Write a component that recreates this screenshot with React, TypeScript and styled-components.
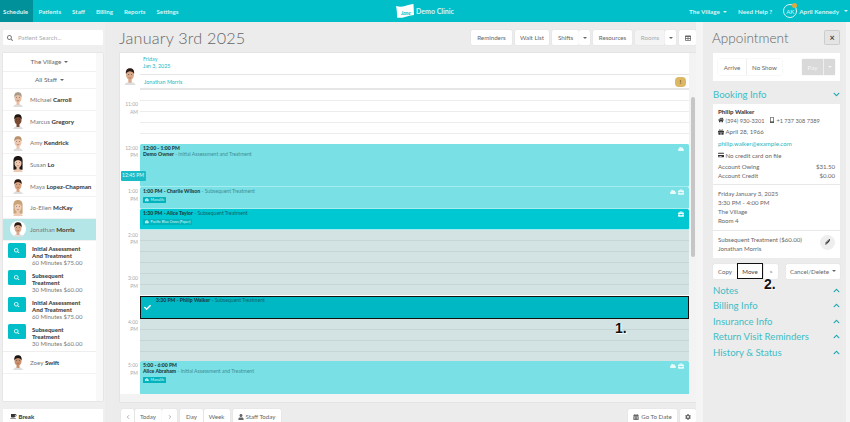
import styled, { createGlobalStyle } from "styled-components";
import {
  FaBriefcase, FaCalendarAlt, FaCheck, FaChevronDown, FaChevronUp, FaCloud, FaCoffee, FaCog, FaTable,
  FaCreditCard, FaGift, FaHome, FaMobileAlt, FaPencilAlt, FaSearch, FaUser,
} from "react-icons/fa";
import { FiChevronLeft, FiChevronRight } from "react-icons/fi";

const GlobalStyle = createGlobalStyle`
  html, body { margin: 0; padding: 0; height: 422px; overflow: hidden; background: #ececec; }
  * { box-sizing: border-box; }
  body { font-family: "Lato", "Open Sans", sans-serif; color: #555; }
`;

const Page = styled.div`
  width: 850px;
  height: 422px;
  display: flex;
  flex-direction: column;
  overflow: hidden;
`;

const TopNav = styled.nav`
  height: 22px;
  flex: none;
  background: #00bfc9;
  display: grid;
  grid-template-columns: 1fr auto 1fr;
  align-items: stretch;
  color: #d5f5f6;
  font-size: 6.3px;
  font-weight: 700;
`;
const NavTabs = styled.div`
  display: flex;
  font-size: 6.2px;
`;
const NavTab = styled.a<{ $active?: boolean }>`
  display: flex;
  align-items: center;
  padding-left: ${(p) => (p.$active ? "3px" : "5.5px")};
  padding-right: ${(p) => (p.$active ? "5px" : "5.5px")};
  background: ${(p) => (p.$active ? "#00919b" : "transparent")};
`;
const Brand = styled.div`
  display: flex;
  align-items: center;
  gap: 2px;
  font-size: 7px;
`;
const NavRight = styled.div`
  display: flex;
  align-items: center;
  justify-content: flex-end;
  gap: 11px;
  padding-right: 2px;
`;
const Caret = styled.span`
  display: inline-block;
  margin-left: 3px;
  border-left: 2px solid transparent;
  border-right: 2px solid transparent;
  border-top: 2.2px solid currentColor;
  vertical-align: middle;
`;
const UserChip = styled.span`
  display: flex;
  align-items: center;
  gap: 2px;
`;
const Initials = styled.span`
  position: relative;
  width: 14px;
  height: 14px;
  border: 0.8px solid #d5f5f6;
  border-radius: 50%;
  display: flex;
  align-items: center;
  justify-content: center;
  font-size: 6px;
  font-weight: 400;
  &::after {
    content: "";
    position: absolute;
    top: -2px;
    right: -1px;
    width: 5px;
    height: 5px;
    background: #e0a93c;
    border-radius: 50%;
  }
`;

const Body = styled.div`
  flex: 1;
  display: flex;
  min-height: 0;
`;

const Sidebar = styled.aside`
  width: 105px;
  flex: none;
  background: #efefef;
  padding: 8px 2px 0 3px;
  display: flex;
  flex-direction: column;
  overflow: hidden;
`;
const SearchBox = styled.div`
  height: 15px;
  flex: none;
  background: #fff;
  border-radius: 1.5px;
  display: flex;
  align-items: center;
  gap: 5px;
  padding-left: 4px;
  font-size: 6.2px;
  color: #aaa;
  margin-bottom: 8px;
  svg { color: #777; font-size: 6px; }
`;
const StaffPanel = styled.div`
  height: 348px;
  flex: none;
  background: #f8f8f8;
  padding-right: 7px;
  box-shadow: 0 0 1px #bbb;
`;
const StaffInner = styled.div`
  height: 100%;
  background: #fff;
`;
const FilterRow = styled.div<{ $h: number }>`
  height: ${(p) => p.$h}px;
  display: flex;
  align-items: center;
  justify-content: center;
  font-size: 6.4px;
  color: #666;
  border-bottom: 0.5px solid #f0f0f0;
`;
const StaffRow = styled.div<{ $selected?: boolean }>`
  height: 21.7px;
  display: flex;
  align-items: center;
  gap: 4px;
  padding-left: 7px;
  font-size: 6.2px;
  color: #777;
  background: ${(p) => (p.$selected ? "#b5e6e7" : "#fff")};
  border-bottom: 0.5px solid #f2f2f2;
  white-space: nowrap;
  b { color: #444; font-weight: 900; }
`;
const ServiceList = styled.div`
  display: flex;
  flex-direction: column;
  padding-top: 2px;
  height: 111px;
  border-bottom: 0.5px solid #eee;
`;
const ServiceRow = styled.div`
  height: 27.5px;
  display: flex;
  gap: 6px;
  padding-left: 5px;
  font-size: 6px;
  line-height: 7.2px;
  color: #777;
  b { display: block; color: #444; font-weight: 900; }
`;
const ServiceText = styled.div`
  padding-top: 2px;
`;
const ServiceButton = styled.span`
  width: 18px;
  height: 15px;
  background: #00bfc9;
  border-radius: 1.5px;
  color: #e6fbfb;
  display: flex;
  align-items: center;
  justify-content: center;
  font-size: 5.5px;
  flex: none;
`;
const BreakBox = styled.div`
  margin-top: 8px;
  height: 20px;
  flex: none;
  background: #fff;
  padding: 4px 0 0 7px;
  font-size: 6px;
  font-weight: 900;
  color: #444;
  display: flex;
  gap: 2px;
  align-items: flex-start;
  svg { font-size: 6.5px; color: #333; }
`;

const Main = styled.main`
  width: 586px;
  flex: none;
  margin-left: 5px;
  background: #ececec;
  padding: 0 0 0 9px;
  display: flex;
  flex-direction: column;
  position: relative;
  overflow: hidden;
`;
const MainHead = styled.div`
  height: 31px;
  flex: none;
  display: flex;
  align-items: center;
  justify-content: space-between;
`;
const Title = styled.h1`
  margin: 0;
  font-size: 16.2px;
  font-weight: 300;
  letter-spacing: 0.2px;
  color: #666;
`;
const ToolGroup = styled.div`
  display: flex;
  gap: 3px;
`;
const Btn = styled.button<{ $w?: number; $dim?: boolean; $join?: boolean }>`
  height: 15px;
  flex: none;
  width: ${(p) => (p.$w ? `${p.$w}px` : "auto")};
  padding: 0;
  border: 0;
  border-radius: 1.5px;
  background: ${(p) => (p.$dim ? "#f4f4f4" : "#fff")};
  color: ${(p) => (p.$dim ? "#aaa" : "#666")};
  font: 400 6.2px "Lato", sans-serif;
  display: flex;
  align-items: center;
  justify-content: center;
  gap: 2px;
  box-shadow: 0 0 1px #ccc;
  margin-right: ${(p) => (p.$join ? "-3px" : "0")};
  svg { font-size: 6px; }
`;
const Calendar = styled.section`
  width: 576px;
  height: 349px;
  flex: none;
  margin-left: 1px;
  background: #fff;
  box-shadow: 0 0 1px #bbb;
  display: flex;
  flex-direction: column;
  position: relative;
`;
const CalTop = styled.div`
  display: flex;
  height: 37px;
  flex: none;
`;
const CalAvatarCell = styled.div`
  width: 20px;
  display: flex;
  align-items: center;
  justify-content: center;
  padding-top: 9px;
`;
const CalTopRight = styled.div`
  flex: 1;
  display: flex;
  flex-direction: column;
  border-right: 7px solid #f3f3f3;
`;
const DateCell = styled.div`
  height: 21px;
  padding: 2.5px 0 0 3px;
  font-size: 5.4px;
  line-height: 7.6px;
  color: #29b7bf;
`;
const StaffHead = styled.div`
  height: 16px;
  border-top: 1.5px solid #e6e6e6;
  border-bottom: 2px solid #e6e6e6;
  display: flex;
  align-items: center;
  justify-content: space-between;
  padding: 0 3px 0 4px;
  font-size: 5.4px;
  color: #29b7bf;
`;
const WarnBadge = styled.span`
  width: 11px;
  height: 10px;
  border-radius: 4px;
  background: #dcb764;
  color: #6b5522;
  font-size: 5px;
  font-weight: 900;
  display: flex;
  align-items: center;
  justify-content: center;
`;
const CalBody = styled.div`
  height: 304px;
  flex: none;
  display: flex;
  overflow: hidden;
`;
const HourColumn = styled.div`
  width: 20px;
  flex: none;
  padding-top: 11px;
`;
const HourLabel = styled.div`
  height: 43.5px;
  text-align: right;
  padding-right: 2px;
  font-size: 5px;
  line-height: 7.6px;
  color: #aaa;
`;
const Day = styled.div`
  width: 549px;
  flex: none;
  display: flex;
  flex-direction: column;
`;
const Slots = styled.div<{ $h: number; $off?: boolean }>`
  height: ${(p) => p.$h}px;
  flex: none;
  background-color: ${(p) => (p.$off ? "#d3e3e3" : "#fff")};
  background-image: repeating-linear-gradient(
    to bottom,
    transparent 0,
    transparent 10px,
    ${(p) => (p.$off ? "#c4d6d6" : "#ececec")} 10px,
    ${(p) => (p.$off ? "#c4d6d6" : "#ececec")} 10.9px
  );
`;
const Appt = styled.div<{ $h: number; $dark?: boolean; $moving?: boolean }>`
  height: ${(p) => p.$h}px;
  flex: none;
  position: relative;
  background: ${(p) => (p.$moving ? "#00b8c4" : p.$dark ? "#00c8d2" : "#79e0e5")};
  border: ${(p) => (p.$moving ? "1px solid #111" : "0")};
  border-bottom: ${(p) => (p.$moving ? "1px solid #111" : "0.5px solid #a5ecef")};
  border-radius: ${(p) => (p.$moving ? "0" : "1.5px")};
  margin-top: 0.5px;
  padding: ${(p) => (p.$moving ? "1.5px 0 0 15px" : "2px 0 0 3px")};
  font-size: 5.1px;
  line-height: 5.8px;
  color: ${(p) => (p.$dark || p.$moving ? "#11636b" : "#3f8f95")};
  b { color: #1c3f44; font-weight: 900; }
`;
const ApptIcons = styled.span`
  position: absolute;
  top: 2px;
  right: 5px;
  display: flex;
  gap: 2px;
  color: #e7fbfb;
  font-size: 6px;
`;
const InsuranceTag = styled.span`
  display: inline-flex;
  align-items: center;
  gap: 2px;
  margin-top: 2px;
  height: 6px;
  padding: 0 2px;
  background: #00b3bd;
  color: #dff8f9;
  font-size: 3.6px;
  line-height: 6px;
  border-radius: 0.5px;
  svg { font-size: 3.6px; }
`;
const CheckMark = styled.span`
  position: absolute;
  left: 3px;
  top: 7px;
  color: #fff;
  font-size: 7px;
  display: flex;
`;
const CalFoot = styled.div`
  flex: 1;
  background: #f3f3f3;
`;
const ScrollTrack = styled.div`
  width: 7px;
  flex: none;
  background: #f3f3f3;
  padding: 7px 1px 0 2px;
`;
const ScrollThumb = styled.div`
  height: 160px;
  background: #c6c6c6;
  border-radius: 2px;
`;
const NowBadge = styled.span`
  position: absolute;
  left: 10.5px;
  top: 149px;
  height: 9.5px;
  width: 25px;
  background: #1cbcc6;
  color: #e8fbfb;
  font-size: 5px;
  line-height: 9.5px;
  text-align: center;
  border-radius: 1px;
`;
const Callout = styled.span<{ $x: number; $y: number }>`
  position: absolute;
  left: ${(p) => p.$x}px;
  top: ${(p) => p.$y}px;
  font: 700 14px "Liberation Sans", sans-serif;
  color: #111;
  text-shadow: 0 0 1.5px #fff, 1px 1px 1px #fff;
  z-index: 5;
`;
const BottomBar = styled.div`
  display: flex;
  flex: none;
  justify-content: space-between;
  margin-top: 7px;
  padding: 0 0 0 2px;
`;
const BottomGroup = styled.div`
  display: flex;
  gap: 3px;
`;
const Joined = styled.div`
  display: flex;
  gap: 0.5px;
`;

const RightColumn = styled.aside`
  flex: 1;
  background: #f5f5f5;
  padding-left: 7px;
  position: relative;
`;
const RightPanel = styled.div`
  height: 100%;
  margin-right: 4px;
  background: #ececec;
  padding: 0 6px 0 10px;
  display: flex;
  flex-direction: column;
`;
const ApptHead = styled.div`
  height: 31px;
  flex: none;
  display: flex;
  align-items: center;
  justify-content: space-between;
`;
const ApptTitle = styled.h2`
  margin: 0 0 0 -1px;
  font-size: 13.6px;
  font-weight: 300;
  color: #666;
`;
const CloseBtn = styled.button`
  width: 16px;
  height: 15px;
  padding: 0;
  border: 0.8px solid #ccc;
  background: #e4e4e4;
  border-radius: 1.5px;
  color: #444;
  font: 700 9px "Lato", sans-serif;
`;
const ActionCard = styled.div`
  height: 28px;
  flex: none;
  background: #fff;
  display: flex;
  align-items: center;
  justify-content: space-between;
  padding: 0 5px;
`;
const Segment = styled.div`
  display: flex;
  box-shadow: 0 0 1px #bbb;
  border-radius: 1.5px;
`;
const SegBtn = styled.span<{ $w: number; $off?: boolean }>`
  width: ${(p) => p.$w}px;
  height: 16px;
  display: flex;
  align-items: center;
  justify-content: center;
  font-size: 6.2px;
  color: ${(p) => (p.$off ? "#f4f4f4" : "#666")};
  background: ${(p) => (p.$off ? "#d9d9d9" : "#fff")};
  & + & { border-left: 0.5px solid ${(p) => (p.$off ? "#eee" : "#ddd")}; }
`;
const SectionHead = styled.div`
  display: flex;
  align-items: center;
  justify-content: space-between;
  height: 15.5px;
  flex: none;
  font-size: 9.6px;
  color: #3cbec6;
  white-space: nowrap;
  svg { color: #1aa5b0; font-size: 7px; }
`;
const BookingHead = styled(SectionHead)`
  margin: 6px 0 1px;
`;
const InfoCard = styled.div`
  background: #fff;
  font-size: 6.1px;
  color: #666;
  flex: none;
`;
const InfoBlock = styled.div<{ $h: number; $pad: number }>`
  height: ${(p) => p.$h}px;
  padding: ${(p) => p.$pad}px 5px 0;
  border-bottom: 1px solid #e8e8e8;
  position: relative;
  &:last-child { border-bottom: 0; }
`;
const InfoLine = styled.div<{ $h?: number }>`
  height: ${(p) => p.$h ?? 9}px;
  display: flex;
  align-items: center;
  gap: 1.5px;
  white-space: nowrap;
  svg { color: #333; font-size: 6px; }
  strong { color: #444; font-weight: 900; }
  a { color: #29b7bf; }
`;
const PhoneLine = styled(InfoLine)`
  font-size: 5.6px;
  svg + span + svg { margin-left: 3px; }
`;
const Money = styled.div`
  height: 9px;
  display: flex;
  align-items: center;
  justify-content: space-between;
`;
const EditBtn = styled.span`
  position: absolute;
  right: 5px;
  top: 4px;
  width: 15px;
  height: 15px;
  border-radius: 50%;
  background: #eee;
  display: flex;
  align-items: center;
  justify-content: center;
  color: #333;
  font-size: 5.5px;
`;
const ApptActions = styled.div`
  display: flex;
  align-items: center;
  margin: 6px 0 4px;
  height: 15px;
  flex: none;
`;
const MoveBtn = styled(Btn)`
  border: 1px solid #111;
  border-radius: 0;
  box-shadow: none;
  height: 16px;
  color: #444;
`;
const NextBtn = styled(Btn)`
  margin-left: 1px;
`;
const CancelBtn = styled(Btn)`
  margin-left: auto;
`;
const Sections = styled.div`
  display: flex;
  flex-direction: column;
`;
const BareCaret = styled(Caret)`
  margin-left: 0;
`;
const TightCaret = styled(Caret)`
  margin-left: 1px;
`;

type FaceProps = { skin: string; hair: string; long?: boolean; size?: number };

// little portrait standing in for the staff photos
const Face = ({ skin, hair, long, size = 16 }: FaceProps) => (
  <svg width={size} height={size} viewBox="1 1 14 14" style={{ flex: "none" }}>
    <circle cx="8" cy="8" r="7" fill="#fff" />
    {long && <path d="M4 5c0-3 2-4 4-4s4 1 4 4v8H4z" fill={hair} />}
    <path d="M3.500 16c.3-2.500 2-3.300 4.500-3.300s4.200.8 4.500 3.300z" fill={long ? skin : "#ddd"} />
    <rect x="6.700" y="10" width="2.600" height="3.200" fill={skin} />
    <ellipse cx="8" cy="7" rx="3.100" ry="4" fill={skin} />
    <path d="M4.800 6.500C4.500 3 6 2 8 2s3.500 1 3.200 4.500C10.500 5 9 4.400 8 4.400S5.500 5 4.800 6.500z" fill={hair} />
    <circle cx="6.800" cy="6.800" r=".35" fill="#222" />
    <circle cx="9.200" cy="6.800" r=".35" fill="#222" />
    <path d="M7 9.300c.6.400 1.400.4 2 0" stroke="#8a4a3a" strokeWidth=".4" fill="none" />
  </svg>
);

const JaneLogo = () => (
  <svg width="18" height="15" viewBox="0 0 18 15">
    <path d="M0 2c3 1 6 1 9 0s6-2 8.500-2l.5 11c-3 .5-6 1-9 2s-6 1-8 .5C1 10 1 6 0 2z" fill="#fff" />
    <text x="5" y="10.500" fontSize="5" fontStyle="italic" fill="#00bfc9" fontFamily="Lato, sans-serif">Jane</text>
  </svg>
);

const staffAbove: [string, string, FaceProps][] = [
  ["Michael", "Carroll", { skin: "#e6bfa5", hair: "#a89a88" }],
  ["Marcus", "Gregory", { skin: "#7a4a33", hair: "#1d1512" }],
  ["Amy", "Kendrick", { skin: "#ecc6ad", hair: "#b98f6c" }],
  ["Susan", "Lo", { skin: "#eec9b0", hair: "#1c1512", long: true }],
  ["Maya", "Lopez-Chapman", { skin: "#d9a582", hair: "#2a1a12" }],
  ["Jo-Ellen", "McKay", { skin: "#efcdb5", hair: "#c8a578", long: true }],
];

const services: [string, string, string][] = [
  ["Initial Assessment", "And Treatment", "60 Minutes $75.00"],
  ["Subsequent", "Treatment", "30 Minutes $60.00"],
  ["Initial Assessment", "And Treatment", "60 Minutes $75.00"],
  ["Subsequent", "Treatment", "30 Minutes $60.00"],
];

const hours: [string, string][] = [
  ["11:00", "AM"], ["12:00", "PM"], ["1:00", "PM"], ["2:00", "PM"], ["3:00", "PM"], ["4:00", "PM"], ["5:00", "PM"],
];

const App = () => {
  return (
    <Page>
      <GlobalStyle />
      <TopNav>
        <NavTabs>
          <NavTab $active>Schedule</NavTab>
          <NavTab>Patients</NavTab>
          <NavTab>Staff</NavTab>
          <NavTab>Billing</NavTab>
          <NavTab>Reports</NavTab>
          <NavTab>Settings</NavTab>
        </NavTabs>
        <Brand><JaneLogo />Demo Clinic</Brand>
        <NavRight>
          <span>The Village<Caret /></span>
          <span>Need Help ?</span>
          <UserChip><Initials>AK</Initials>April Kennedy<Caret /></UserChip>
        </NavRight>
      </TopNav>

      <Body>
        <Sidebar>
          <SearchBox><FaSearch />Patient Search...</SearchBox>
          <StaffPanel>
            <StaffInner>
              <FilterRow $h={18.5}>The Village<Caret /></FilterRow>
              <FilterRow $h={17.5}>All Staff<Caret /></FilterRow>
              {staffAbove.map(([first, last, face]) => (
                <StaffRow key={first}><Face {...face} /><span>{first} <b>{last}</b></span></StaffRow>
              ))}
              <StaffRow $selected>
                <Face skin="#d9a98a" hair="#2b1d16" /><span>Jonathan <b>Morris</b></span>
              </StaffRow>
              <ServiceList>
                {services.map(([a, b, c], i) => (
                  <ServiceRow key={i}>
                    <ServiceButton><FaSearch /></ServiceButton>
                    <ServiceText><b>{a}</b><b>{b}</b>{c}</ServiceText>
                  </ServiceRow>
                ))}
              </ServiceList>
              <StaffRow><Face skin="#c98f6c" hair="#1a1310" /><span>Zoey <b>Swift</b></span></StaffRow>
            </StaffInner>
          </StaffPanel>
          <BreakBox><FaCoffee />Break</BreakBox>
        </Sidebar>

        <Main>
          <MainHead>
            <Title>January 3rd 2025</Title>
            <ToolGroup>
              <Btn $w={41}>Reminders</Btn>
              <Btn $w={34}>Wait List</Btn>
              <Btn $w={27} $join>Shifts</Btn>
              <Btn $w={11}><BareCaret /></Btn>
              <Btn $w={39}>Resources</Btn>
              <Btn $w={30} $dim $join>Rooms</Btn>
              <Btn $w={11}><BareCaret /></Btn>
              <Btn $w={17}><FaTable /></Btn>
            </ToolGroup>
          </MainHead>

          <Calendar>
            <CalTop>
              <CalAvatarCell><Face skin="#d9a98a" hair="#2b1d16" size={18} /></CalAvatarCell>
              <CalTopRight>
                <DateCell>Friday<br />Jan 3, 2025</DateCell>
                <StaffHead>Jonathan Morris<WarnBadge>!</WarnBadge></StaffHead>
              </CalTopRight>
            </CalTop>
            <CalBody>
              <HourColumn>
                {hours.map(([t, m]) => (
                  <HourLabel key={t}>{t}<br />{m}</HourLabel>
                ))}
              </HourColumn>
              <Day>
                <Slots $h={53.5} />
                <Appt $h={42.5}>
                  <b>12:00 - 1:00 PM</b><br /><b>Demo Owner</b> - Initial Assessment and Treatment
                  <ApptIcons><FaCloud /></ApptIcons>
                </Appt>
                <Appt $h={21.5}>
                  <b>1:00 PM - Charlie Wilson</b> - Subsequent Treatment<br />
                  <InsuranceTag><FaBriefcase />Manulife</InsuranceTag>
                  <ApptIcons><FaCloud /><FaBriefcase /></ApptIcons>
                </Appt>
                <Appt $h={21} $dark>
                  <b>1:30 PM - Alice Taylor</b> - Subsequent Treatment<br />
                  <InsuranceTag><FaBriefcase />Pacific Blue Cross (Paper)</InsuranceTag>
                  <ApptIcons><FaBriefcase /></ApptIcons>
                </Appt>
                <Slots $h={65} $off />
                <Appt $h={23} $moving>
                  <b>3:30 PM - Philip Walker</b> - Subsequent Treatment
                  <CheckMark><FaCheck /></CheckMark>
                </Appt>
                <Slots $h={42} $off />
                <Appt $h={34}>
                  <b>5:00 - 6:00 PM</b><br /><b>Alice Abraham</b> - Initial Assessment and Treatment<br />
                  <InsuranceTag><FaBriefcase />Manulife</InsuranceTag>
                  <ApptIcons><FaCloud /><FaBriefcase /></ApptIcons>
                </Appt>
              </Day>
              <ScrollTrack><ScrollThumb /></ScrollTrack>
            </CalBody>
            <CalFoot />
          </Calendar>

          <NowBadge>12:45 PM</NowBadge>
          <Callout $x={505} $y={298}>1.</Callout>

          <BottomBar>
            <BottomGroup>
              <Joined>
                <Btn $w={13}><FiChevronLeft /></Btn>
                <Btn $w={27}>Today</Btn>
                <Btn $w={15}><FiChevronRight /></Btn>
              </Joined>
              <Joined>
                <Btn $w={23}>Day</Btn>
                <Btn $w={26}>Week</Btn>
              </Joined>
              <Btn $w={48}><FaUser />Staff Today</Btn>
            </BottomGroup>
            <BottomGroup>
              <Btn $w={49}><FaCalendarAlt />Go To Date</Btn>
              <Btn $w={16}><FaCog /></Btn>
            </BottomGroup>
          </BottomBar>
        </Main>

        <RightColumn>
          <RightPanel>
            <ApptHead>
              <ApptTitle>Appointment</ApptTitle>
              <CloseBtn>×</CloseBtn>
            </ApptHead>
            <ActionCard>
              <Segment>
                <SegBtn $w={28}>Arrive</SegBtn>
                <SegBtn $w={36}>No Show</SegBtn>
              </Segment>
              <Segment>
                <SegBtn $w={21} $off>Pay</SegBtn>
                <SegBtn $w={12} $off><BareCaret /></SegBtn>
              </Segment>
            </ActionCard>
            <BookingHead>Booking Info<FaChevronDown /></BookingHead>
            <InfoCard>
              <InfoBlock $h={81} $pad={3}>
                <InfoLine><strong>Philip Walker</strong></InfoLine>
                <PhoneLine><FaHome /><span>(394) 930-3201</span><FaMobileAlt />+1 737 308 7389</PhoneLine>
                <InfoLine $h={14}><FaGift /> April 28, 1966</InfoLine>
                <InfoLine $h={10}><a>philip.walker@example.com</a></InfoLine>
                <InfoLine $h={13}><FaCreditCard /> No credit card on file</InfoLine>
                <Money><span>Account Owing</span><span>$31.50</span></Money>
                <Money><span>Account Credit</span><span>$0.00</span></Money>
              </InfoBlock>
              <InfoBlock $h={46} $pad={4}>
                <InfoLine>Friday January 3, 2025</InfoLine>
                <InfoLine>3:30 PM - 4:00 PM</InfoLine>
                <InfoLine>The Village</InfoLine>
                <InfoLine>Room 4</InfoLine>
              </InfoBlock>
              <InfoBlock $h={27} $pad={4.5}>
                <InfoLine>Subsequent Treatment ($60.00)</InfoLine>
                <InfoLine>Jonathan Morris</InfoLine>
                <EditBtn><FaPencilAlt /></EditBtn>
              </InfoBlock>
            </InfoCard>
            <ApptActions>
              <Btn $w={24}>Copy</Btn>
              <MoveBtn $w={26}>Move</MoveBtn>
              <NextBtn $w={14}>&gt;</NextBtn>
              <CancelBtn $w={54}>Cancel/Delete<TightCaret /></CancelBtn>
            </ApptActions>
            <Sections>
              <SectionHead>Notes<FaChevronUp /></SectionHead>
              <SectionHead>Billing Info<FaChevronUp /></SectionHead>
              <SectionHead>Insurance Info<FaChevronUp /></SectionHead>
              <SectionHead>Return Visit Reminders<FaChevronUp /></SectionHead>
              <SectionHead>History &amp; Status<FaChevronUp /></SectionHead>
            </Sections>
          </RightPanel>
          <Callout $x={68} $y={254}>2.</Callout>
        </RightColumn>
      </Body>
    </Page>
  );
};

export default App;
